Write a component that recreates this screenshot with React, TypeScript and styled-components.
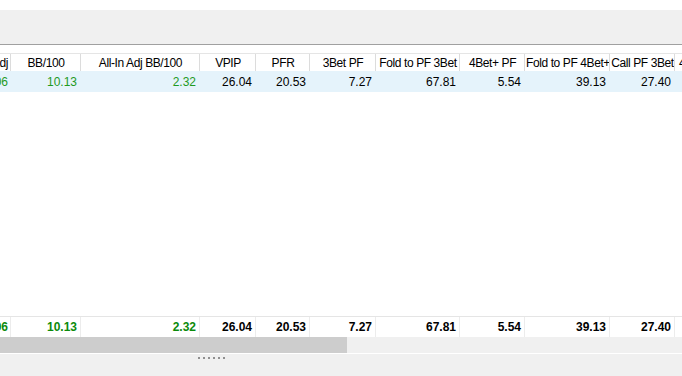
import { createGlobalStyle, styled } from "styled-components"

const GlobalStyle = createGlobalStyle`
    html, body {
        margin: 0;
        padding: 0;
        background: #ffffff;
    }
    body {
        font-family: "Liberation Sans", Arial, sans-serif;
        font-size: 12px;
        color: #000000;
    }
`

const COLS = "11px 70px 119px 56px 54px 66px 84px 65px 85px 65px 90px"

const Window = styled.div`
    width: 682px;
    height: 376px;
    display: flex;
    flex-direction: column;
    overflow: hidden;
    background: #ffffff;
`

const TopGap = styled.div`
    height: 10px;
    flex-shrink: 0;
    background: #ffffff;
`

const Toolbar = styled.div`
    height: 34px;
    flex-shrink: 0;
    background: #f0f0f0;
    border-bottom: 1px solid #a0a0a0;
`

const Spacer = styled.div`
    height: 8px;
    flex-shrink: 0;
    background: #ffffff;
`

const GridRow = styled.div<{ $kind: "head" | "data" | "total" }>`
    display: grid;
    grid-template-columns: ${COLS};
    width: max-content;
    flex-shrink: 0;
    height: ${(p) => (p.$kind === "head" ? "17px" : p.$kind === "data" ? "21px" : "20px")};
    background: ${(p) => (p.$kind === "data" ? "#e5f3fb" : "#ffffff")};
    border-top: ${(p) => (p.$kind === "data" ? "none" : "1px solid #e5e5e5")};
    font-weight: ${(p) => (p.$kind === "total" ? "bold" : "normal")};
`

const HeadCell = styled.div<{ $align: "end" | "center" | "start" }>`
    display: flex;
    align-items: center;
    justify-content: ${(p) =>
        p.$align === "end" ? "flex-end" : p.$align === "start" ? "flex-start" : "safe center"};
    padding: ${(p) => (p.$align === "end" ? "0 2px 0 0" : p.$align === "start" ? "0 0 0 4px" : "0 0 0 1px")};
    border-right: 1px solid #dcdcdc;
    overflow: hidden;
    white-space: nowrap;
    letter-spacing: -0.4px;
    box-sizing: border-box;
    color: #000000;
`

const Cell = styled.div<{ $green?: boolean; $lined?: boolean; $bold?: boolean; $first?: boolean }>`
    display: flex;
    align-items: center;
    justify-content: flex-end;
    padding-right: ${(p) => (p.$first ? "2px" : "3px")};
    overflow: hidden;
    white-space: nowrap;
    box-sizing: border-box;
    border-right: 1px solid ${(p) => (p.$lined ? "#ececec" : "transparent")};
    color: ${(p) => (p.$green ? (p.$bold ? "#0b8a0b" : "#1f9a1f") : "#000000")};
`

const Filler = styled.div`
    flex: 1;
    background: #ffffff;
`

const ScrollTrack = styled.div`
    height: 16px;
    flex-shrink: 0;
    background: #f0f0f0;
    display: flex;
`

const ScrollThumb = styled.div`
    width: 347px;
    height: 100%;
    background: #cdcdcd;
`

const StatusBar = styled.div`
    height: 23px;
    flex-shrink: 0;
    box-sizing: border-box;
    background: #f0f0f0;
    border-top: 1px solid #ffffff;
    display: flex;
    align-items: flex-start;
    padding: 3px 0 0 198px;
`

const Grip = styled.div`
    display: flex;
    gap: 3px;
`

const Dot = styled.span`
    width: 2px;
    height: 2px;
    background: #909090;
`

const headers = [
    "All-In Adj",
    "BB/100",
    "All-In Adj BB/100",
    "VPIP",
    "PFR",
    "3Bet PF",
    "Fold to PF 3Bet",
    "4Bet+ PF",
    "Fold to PF 4Bet+",
    "Call PF 3Bet",
    "4Bet PF Call",
]

const values: { v: string; green?: boolean }[] = [
    { v: "3.06", green: true },
    { v: "10.13", green: true },
    { v: "2.32", green: true },
    { v: "26.04" },
    { v: "20.53" },
    { v: "7.27" },
    { v: "67.81" },
    { v: "5.54" },
    { v: "39.13" },
    { v: "27.40" },
    { v: "" },
]

const App = () => {
    const last = headers.length - 1
    return (
        <>
            <GlobalStyle />
            <Window>
                <TopGap />
                <Toolbar />
                <Spacer />
                <GridRow $kind="head">
                    {headers.map((h, i) => (
                        <HeadCell key={h} $align={i === 0 ? "end" : i === last ? "start" : "center"}>
                            {h}
                        </HeadCell>
                    ))}
                </GridRow>
                <GridRow $kind="data">
                    {values.map((c, i) => (
                        <Cell key={i} $green={c.green} $first={i === 0}>
                            {c.v}
                        </Cell>
                    ))}
                </GridRow>
                <Filler />
                <GridRow $kind="total">
                    {values.map((c, i) => (
                        <Cell key={i} $green={c.green} $first={i === 0} $lined $bold>
                            {c.v}
                        </Cell>
                    ))}
                </GridRow>
                <ScrollTrack>
                    <ScrollThumb />
                </ScrollTrack>
                <StatusBar>
                    <Grip>
                        {Array.from({ length: 6 }).map((_, i) => (
                            <Dot key={i} />
                        ))}
                    </Grip>
                </StatusBar>
            </Window>
        </>
    )
}

export default App
